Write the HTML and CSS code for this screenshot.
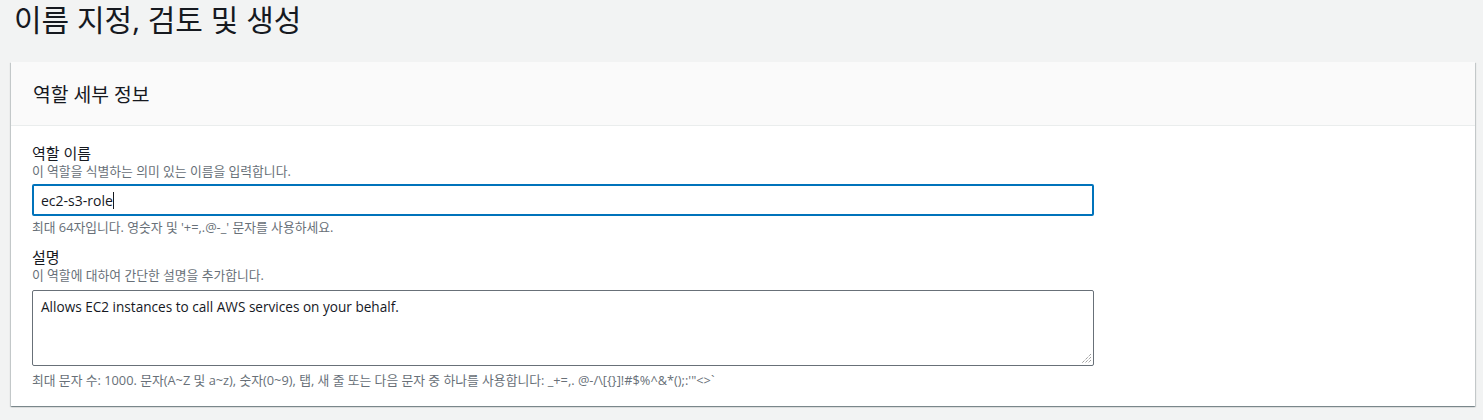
FILE: index.html
```html
<!DOCTYPE html>
<html lang="ko">
<head>
<meta charset="utf-8">
<link rel="stylesheet" href="styles.css">
</head>
<body>
<h1 class="page-title">이름 지정, 검토 및 생성</h1>
<section class="panel">
  <div class="panel-header">역할 세부 정보</div>
  <div class="panel-body">
    <div class="field field-name">
      <div class="label">역할 이름</div>
      <div class="desc">이 역할을 식별하는 의미 있는 이름을 입력합니다.</div>
      <div class="input focused"><span class="value">ec2-s3-role</span><span class="caret"></span></div>
      <div class="hint">최대 64자입니다. 영숫자 및 '+=,.@-_' 문자를 사용하세요.</div>
    </div>
    <div class="field field-desc">
      <div class="label">설명</div>
      <div class="desc">이 역할에 대하여 간단한 설명을 추가합니다.</div>
      <div class="textarea"><span class="value">Allows EC2 instances to call AWS services on your behalf.</span>
        <svg class="grip" width="11" height="11" viewBox="0 0 11 11"><path d="M10 1 L1 10 M10 4 L4 10 M10 7 L7 10" stroke="#777" stroke-width="1" stroke-dasharray="1 1" fill="none"/></svg>
      </div>
      <div class="hint hint-last">최대 문자 수: 1000. 문자(A~Z 및 a~z), 숫자(0~9), 탭, 새 줄 또는 다음 문자 중 하나를 사용합니다: _+=,. @-/\[{}]!#$%^&amp;*();:'"&lt;&gt;`</div>
    </div>
  </div>
</section>
</body>
</html>
```
FILE: styles.css
```css
html, body {
  margin: 0;
  padding: 0;
}
body {
  background: #f2f3f3;
  font-family: "Open Sans", "Noto Sans CJK KR", sans-serif;
  color: #16191f;
  width: 1483px;
  height: 420px;
  overflow: hidden;
}
.page-title {
  margin: 0;
  padding: 0 14px;
  font-size: 30px;
  font-weight: 400;
  line-height: 40px;
  color: #16191f;
}
.panel {
  margin: 22px 8px 0 11px;
  background: #fff;
  box-shadow: 0 1px 1px 0 rgba(0, 28, 36, 0.3), 1px 1px 1px 0 rgba(0, 28, 36, 0.15), -1px 1px 1px 0 rgba(0, 28, 36, 0.15);
}
.panel-header {
  height: 63px;
  display: flex;
  align-items: center;
  padding: 0 22px;
  background: #fafafa;
  border-bottom: 1px solid #eaeded;
  font-size: 19.3px;
  color: #16191f;
}
.panel-body {
  padding: 17px 21px 18px;
}
.field-desc {
  margin-top: 12px;
}
.label {
  font-size: 15px;
  line-height: 20px;
  color: #16191f;
}
.desc {
  font-size: 12.8px;
  line-height: 16px;
  color: #687078;
}
.input {
  box-sizing: border-box;
  margin-top: 5px;
  max-width: 1062px;
  height: 32px;
  border: 2px solid #0073bb;
  border-radius: 2px;
  padding: 0 7px;
  display: flex;
  align-items: center;
  font-size: 14px;
}
.caret {
  display: inline-block;
  width: 1px;
  height: 17px;
  background: #16191f;
}
.textarea {
  position: relative;
  box-sizing: border-box;
  margin-top: 7px;
  max-width: 1062px;
  height: 76px;
  border: 1px solid #687078;
  border-radius: 2px;
  padding: 6px 8px;
  font-size: 13.6px;
  line-height: 20px;
}
.grip {
  position: absolute;
  right: 1px;
  bottom: 1px;
}
.hint {
  margin-top: 3px;
  font-size: 12.8px;
  line-height: 16px;
  color: #687078;
}
.hint-last {
  margin-top: 6px;
}
```
